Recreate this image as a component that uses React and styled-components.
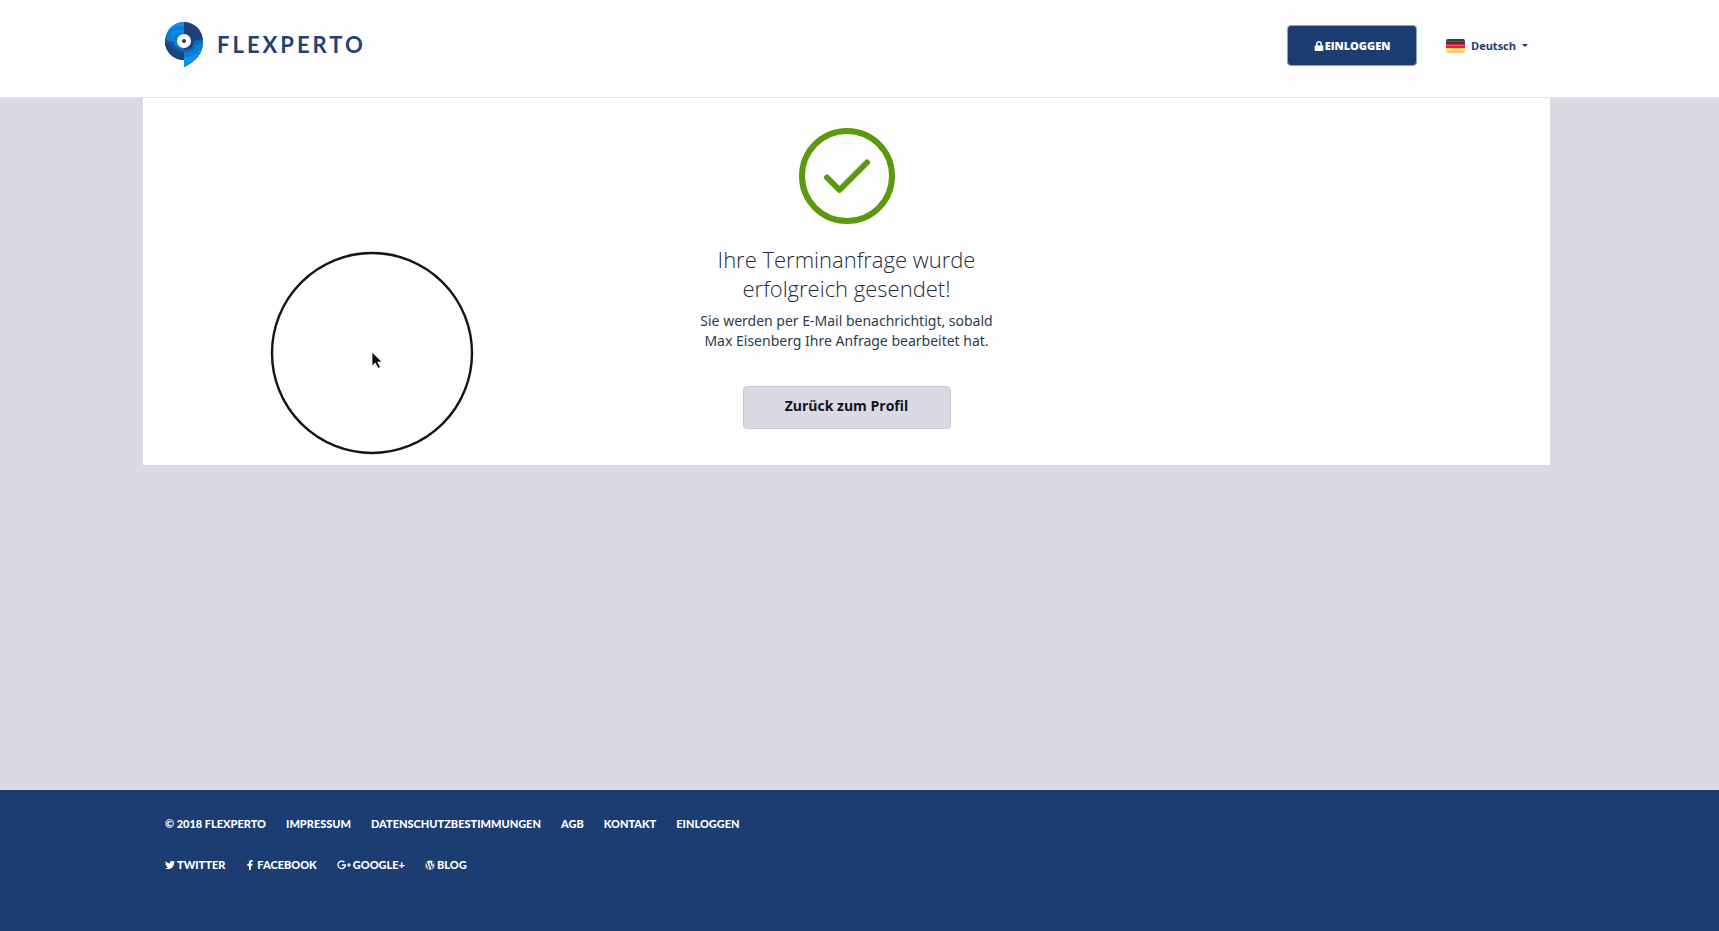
import React from 'react';
import styled, { createGlobalStyle } from 'styled-components';
import {
	FaLock,
	FaTwitter,
	FaFacebookF,
	FaWordpress,
} from 'react-icons/fa';

const legalLinks = [
	'Impressum',
	'Datenschutzbestimmungen',
	'AGB',
	'Kontakt',
	'Einloggen',
];

const Logo = () => (
	<LogoLink href="#">
		<svg width="38" height="45" viewBox="0 0 38 45" aria-hidden="true">
			<path d="M19 0A19 19 0 0 0 19 38Z" fill="#0a7ed4" />
			<path d="M19 0A19 19 0 0 0 4 8Q11 3 19 4Z" fill="#0d95ee" />
			<path d="M6 12Q11 6 19 8V11Q11 10 8 16Z" fill="#0c8ce4" />
			<path d="M0 16Q3 20 8 19Q10 27 19 28V38A19 19 0 0 1 0 16Z" fill="#1558a0" />
			<path d="M0 20Q5 22 6 24Q10 30 19 31V38A19 19 0 0 1 0 20Z" fill="#1b4379" />
			<path d="M19 0A19 19 0 0 1 38 19Q38 36 19 45Z" fill="#1b4379" />
			<path d="M19 28Q28 28 29 19Q34 19 38 16V19Q38 36 19 45Z" fill="#1467b4" />
			<path d="M19 31Q29 30 32 23Q35 22 38 20Q38 36 19 45Z" fill="#0a7ed4" />
			<path d="M19 36Q29 35 36 27Q32 39 19 45Z" fill="#0d95ee" />
			<circle cx="19" cy="19" r="7" fill="#fefefe" />
			<circle cx="19" cy="19" r="2" fill="#1b3d72" />
		</svg>
		<Wordmark>FLEXPERTO</Wordmark>
	</LogoLink>
);

const GooglePlus = () => (
	<svg width="14" height="10" viewBox="0 0 14 10" aria-hidden="true">
		<path
			d="M7.4 2.3A3.7 3.7 0 1 0 8.4 5H4.9"
			fill="none"
			stroke="currentColor"
			strokeWidth="1.3"
		/>
		<path d="M10 5h4M12 3v4" stroke="currentColor" strokeWidth="1.2" />
	</svg>
);

const LanguageSelect = () => (
	<Language>
		<Flag viewBox="0 0 19 14" aria-hidden="true">
			<rect width="19" height="5" fill="#3b3b3b" />
			<rect y="5" width="19" height="4" fill="#e0233c" />
			<rect y="9" width="19" height="5" fill="#fbd05a" />
			<rect y="2" width="19" height="1" fill="#5c5c5c" />
			<rect y="6" width="19" height="1" fill="#ee5a6c" />
			<rect y="10" width="19" height="2" fill="#fde08a" />
		</Flag>
		<Select aria-label="Sprache" defaultValue="de">
			<option value="de">Deutsch</option>
		</Select>
		<Caret />
	</Language>
);

const Pointer = () => (
	<PointerRing viewBox="0 0 204 204" aria-hidden="true">
		<circle cx="102" cy="102" r="100" fill="none" stroke="#14141e" strokeWidth="2.4" />
		<path
			d="M102 101V115L105.300 112L108 117.500L110.400 116.300L107.800 111H112Z"
			fill="#0d0d14"
			stroke="#f4f4fa"
			strokeWidth="0.8"
		/>
	</PointerRing>
);

const App = () => {
	return (
		<Page>
			<GlobalStyle />
			<Header>
				<Bar>
					<Logo />
					<Actions>
						<LoginButton type="button">
							<FaLock size={10} />
							Einloggen
						</LoginButton>
						<LanguageSelect />
					</Actions>
				</Bar>
			</Header>
			<Main>
				<Card>
					<svg width="96" height="96" viewBox="0 0 96 96" fill="none" stroke="#5b990f" strokeWidth="6" aria-hidden="true">
						<circle cx="48" cy="48" r="45" />
						<path d="M28 49.500L40.500 62L68 34.500" strokeLinecap="round" strokeLinejoin="round" />
					</svg>
					<Title>
						Ihre Terminanfrage wurde
						<br />
						erfolgreich gesendet!
					</Title>
					<Message>
						Sie werden per E-Mail benachrichtigt, sobald
						<br />
						Max Eisenberg Ihre Anfrage bearbeitet hat.
					</Message>
					<BackButton type="button">Zurück zum Profil</BackButton>
					<Pointer />
				</Card>
			</Main>
			<Footer>
				<LinkRow>
					<span>© 2018 Flexperto</span>
					{legalLinks.map((label) => (
						<FooterLink href="#" key={label}>{label}</FooterLink>
					))}
				</LinkRow>
				<LinkRow>
					<FooterLink href="#"><FaTwitter size={10} />Twitter</FooterLink>
					<FooterLink href="#"><FaFacebookF size={10} />Facebook</FooterLink>
					<FooterLink href="#"><GooglePlus />Google+</FooterLink>
					<FooterLink href="#"><FaWordpress size={10} />Blog</FooterLink>
				</LinkRow>
			</Footer>
		</Page>
	);
};

export default App;

const GlobalStyle = createGlobalStyle`
	* {
		box-sizing: border-box;
	}
	body {
		margin: 0;
		font-family: 'Open Sans', sans-serif;
		background: #dadae4;
	}
`;
const Page = styled.div`
	display: flex;
	flex-direction: column;
	min-height: 100vh;
`;
const Header = styled.header`
	padding: 0 169px 0 143px;
	background: #fefefe;
	border-bottom: 1px solid #e4e4e8;
`;
const Bar = styled.div`
	display: flex;
	align-items: center;
	justify-content: space-between;
	padding: 22px 22px 30px;
`;
const LogoLink = styled.a`
	display: flex;
	align-items: center;
	gap: 14px;
	text-decoration: none;
`;
const Wordmark = styled.span`
	font-family: Lato, sans-serif;
	font-size: 22px;
	font-weight: 700;
	line-height: 24px;
	letter-spacing: 3px;
	color: #1b4379;
`;
const Actions = styled.div`
	display: flex;
	align-items: center;
	gap: 29px;
	padding-top: 2px;
`;
const LoginButton = styled.button`
	display: flex;
	align-items: center;
	justify-content: center;
	gap: 1px;
	width: 130px;
	height: 41px;
	padding: 0;
	border: 1px solid #8fa1bd;
	border-radius: 4px;
	background: #1b3d72;
	color: #fefefe;
	font-family: 'Open Sans', sans-serif;
	font-size: 11px;
	font-weight: 800;
	text-transform: uppercase;
`;
const Language = styled.div`
	display: flex;
	align-items: center;
	gap: 6px;
`;
const Flag = styled.svg`
	width: 19px;
	height: 14px;
	border-radius: 2px;
`;
const Select = styled.select`
	appearance: none;
	padding: 0;
	border: 0;
	background: transparent;
	color: #1b3d72;
	font-family: 'Open Sans', sans-serif;
	font-size: 11px;
	font-weight: 700;
`;
const Caret = styled.span`
	border: 3px solid transparent;
	border-top-color: #1b3d72;
	border-bottom: 0;
`;
const Main = styled.main`
	flex: 1;
	padding: 0 169px 0 143px;
`;
const Card = styled.section`
	position: relative;
	display: flex;
	flex-direction: column;
	align-items: center;
	padding: 30px 20px 36px;
	background: #fefefe;
	text-align: center;
`;
const Title = styled.h1`
	margin: 21px 0 8px;
	font-size: 22px;
	font-weight: 300;
	line-height: 29px;
	color: #1f2d40;
`;
const Message = styled.p`
	margin: 0 0 35px;
	font-family: 'Noto Sans', sans-serif;
	font-size: 14px;
	line-height: 20px;
	color: #2e3c4f;
`;
const BackButton = styled.button`
	width: 208px;
	height: 43px;
	padding: 0 0 4px;
	border: 1px solid #c6cada;
	border-radius: 4px;
	background: #dadae4;
	color: #10141a;
	font-family: 'Open Sans', sans-serif;
	font-size: 14px;
	font-weight: 700;
`;
const PointerRing = styled.svg`
	position: absolute;
	top: 153px;
	left: 127px;
	width: 204px;
	height: 204px;
	pointer-events: none;
`;
const Footer = styled.footer`
	display: flex;
	flex-direction: column;
	gap: 25px;
	padding: 26px 165px 58px;
	background: #1b3d72;
`;
const LinkRow = styled.nav`
	display: flex;
	flex-wrap: wrap;
	gap: 20px;
	color: #fefefe;
	font-family: Lato, sans-serif;
	font-size: 11px;
	font-weight: 900;
	line-height: 16px;
	text-transform: uppercase;
`;
const FooterLink = styled.a`
	display: flex;
	align-items: center;
	gap: 2px;
	color: inherit;
	text-decoration: none;
`;
